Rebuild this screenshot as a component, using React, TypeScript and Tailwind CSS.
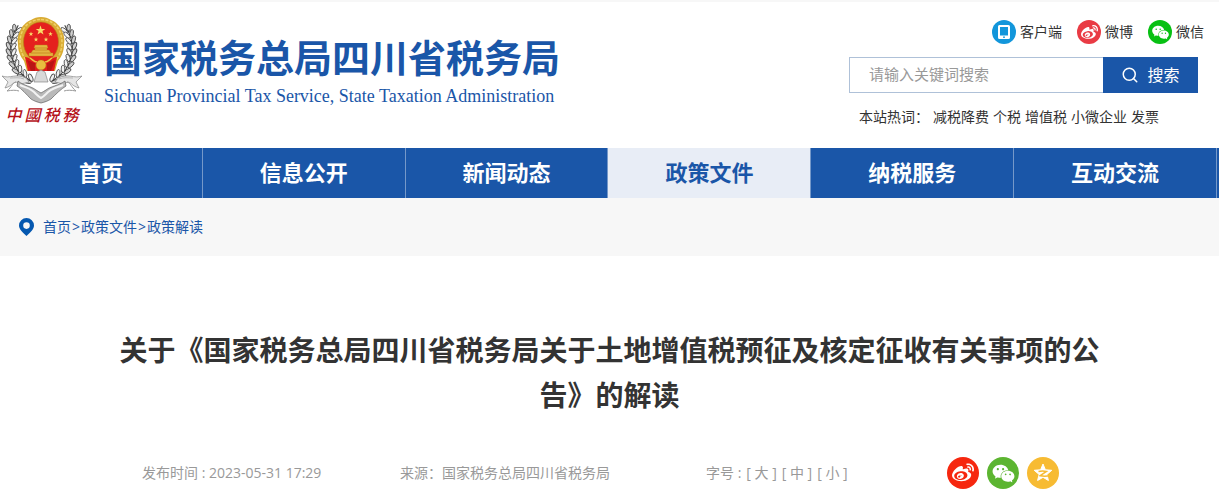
import { FaWeibo } from "react-icons/fa";
import { AiFillWechat } from "react-icons/ai";
import { Search } from "lucide-react";

const navItems = ["首页", "信息公开", "新闻动态", "政策文件", "纳税服务", "互动交流"];
const hotWords = ["减税降费", "个税", "增值税", "小微企业", "发票"];
const fontSizes = ["大", "中", "小"];

const star = "M0-5 1.2-1.6 4.8-1.6 1.9.6 3 4 0 1.9-3 4-1.9.6-4.8-1.6-1.2-1.6Z";

// leaves of the wreath, from the top down
const leaves = [
  { x: 17, y: 13, r: 24 },
  { x: 14, y: 18, r: 18 },
  { x: 12, y: 24, r: 12 },
  { x: 11, y: 30, r: 5 },
  { x: 11, y: 36, r: -2 },
  { x: 12, y: 42, r: -10 },
  { x: 14, y: 48, r: -18 },
  { x: 17, y: 54, r: -28 },
  { x: 22, y: 59, r: -40 },
  { x: 28, y: 64, r: -52 },
];

function Wreath() {
  return (
    <g>
      {leaves.map((l) => (
        <g key={l.y} transform={`translate(${l.x} ${l.y}) rotate(${l.r})`}>
          <ellipse cx="-2.6" cy="0" rx="1.8" ry="4" transform="rotate(-28)" fill="#cfcfcf" stroke="#4a4a4a" strokeWidth="0.9" />
          <ellipse cx="3" cy="0" rx="1.8" ry="4" transform="rotate(28)" fill="#f0f0f0" stroke="#555" strokeWidth="0.9" />
          <path d="M0-3V3" stroke="#3c3c3c" strokeWidth="1" />
        </g>
      ))}
    </g>
  );
}

function Emblem() {
  return (
    <svg viewBox="0 0 84 90" className="h-[90px] w-[84px]" aria-hidden="true">
      <Wreath />
      <g transform="translate(83 0) scale(-1 1)">
        <Wreath />
      </g>
      <path d="M41 2c4 0 7 1 10 3 5 2 9 6 11 11 2 4 3 8 2 13 0 7-2 12-6 17l-3 10H27l-3-10c-4-5-6-10-6-17-1-5 0-9 2-13 2-5 6-9 11-11 3-2 6-3 10-3Z" fill="#d9ab33" />
      <path d="M41 4.500c12 0 21 9 21 23 0 8-3 14-7 19H27c-4-5-7-11-7-19 0-14 9-23 21-23Z" fill="none" stroke="#efd068" strokeWidth="1.500" strokeDasharray="3 1.500" />
      <ellipse cx="41" cy="27" rx="17.500" ry="20" fill="#e5201e" stroke="#b77d14" strokeWidth="0.600" />
      <g fill="#f9dc68">
        <path d={star} transform="translate(40.5 15.5)" />
        <path d={star} transform="translate(31 19) scale(.48)" />
        <path d={star} transform="translate(50.5 19) scale(.48)" />
        <path d={star} transform="translate(36 24.5) scale(.48)" />
        <path d={star} transform="translate(46 24.5) scale(.48)" />
      </g>
      <path d="M35 30h12l1 3H34ZM35 33h12v2H35ZM33 35h16l2 3H31ZM29 38h24v3H29Z" fill="#e3b540" stroke="#c07f18" strokeWidth="0.400" />
      <path d="M25 42c5 0 6 4 11 3h10c5 1 6-3 11-3l-3 14H28Z" fill="#e11b1a" />
      <path d="M27 45c4 1 5 3 8 3v8h-4ZM55 45c-4 1-5 3-8 3v8h4Z" fill="#b91515" />
      <path d="M30 43c3 2 4 4 7 4M52 43c-3 2-4 4-7 4" fill="none" stroke="#efc54c" strokeWidth="1.500" />
      <circle cx="41" cy="50" r="5" fill="#e9bd3e" stroke="#b67b18" strokeWidth="0.800" strokeDasharray="1 .6" />
      <path d="M37 57l4-2 4 2 3 10H34Z" fill="#d8d8d8" stroke="#777" strokeWidth="0.600" />
      {/* ribbon */}
      <path d="M2 61c8 3 14-3 24 2l3 4-8 2-5-2c-4 1-4 4-11 6l3-6Z" fill="#e6e6e6" stroke="#858585" strokeWidth="0.700" />
      <path d="M82 61c-8 3-14-3-24 2l-3 4 8 2 5-2c4 1 4 4 11 6l-3-6Z" fill="#e6e6e6" stroke="#858585" strokeWidth="0.700" />
      <path d="M18 66c6 5 13 5 18 9 2 1 3 2 5 3 2-1 3-2 5-3 5-4 12-4 19-9l1 5c-5 3-10 8-15 13-3 2-6 3-10 4-4-1-7-2-10-4-5-5-9-10-14-13Z" fill="#b9b9b9" stroke="#606060" strokeWidth="0.700" />
      <path d="M20 70c6 3 11 3 16 9 2 2 3 3 5 4 2-1 3-2 5-4 5-6 10-6 17-9" fill="none" stroke="#f2f2f2" strokeWidth="2" />
      <path d="M16 67c-4 1-4 5-9 9 5-1 9-1 12 0M67 67c4 1 4 5 9 9-5-1-9-1-12 0" fill="none" stroke="#9a9a9a" strokeWidth="1" />
      <path d="M10 63c5 0 9-1 14 1M73 63c-5 0-9-1-14 1" fill="none" stroke="#aaa" strokeWidth="0.800" />
    </svg>
  );
}

function PhoneIcon() {
  return (
    <svg viewBox="0 0 24 24" className="size-6" aria-hidden="true">
      <path fillRule="evenodd" fill="#fff" d="M7.5 5h9A1.5 1.5 0 0 1 18 6.500v11a1.500 1.500 0 0 1-1.500 1.500h-9A1.500 1.500 0 0 1 6 17.500v-11A1.500 1.500 0 0 1 7.500 5ZM8 7v8.500h8V7Zm4 9.300a.9.9 0 1 0 0 1.800.9.9 0 0 0 0-1.800Z" />
    </svg>
  );
}

function QzoneIcon() {
  return (
    <svg viewBox="0 0 32 32" className="size-8" aria-hidden="true">
      <path d="M16 7l2.400 5.800 6.400.5-4.900 4.100 1.500 6.100-5.400-3.200-5.400 3.200 1.500-6.100-4.900-4.100 6.400-.5Z" fill="#fff" stroke="#fff" strokeLinejoin="round" />
      <path d="M11.500 14.500c2.600-.6 5.300-.5 8-.1l-6.300 4.300c3.200.7 7 .6 10.300-.5" fill="none" stroke="#f7bb33" strokeWidth="1.500" />
    </svg>
  );
}

export default function App() {
  return (
    <div className="min-h-screen bg-white font-['Open_Sans','Noto_Sans_CJK_SC',sans-serif] text-sm text-[#333]">
      <header className="flex items-start justify-between border-t-2 border-[#f7f7f7] pr-[15px] pb-[21px]">
        <a href="#" className="flex text-[#1a56a8]">
          <div className="flex w-[84px] flex-col items-center pt-[13px]">
            <Emblem />
            <span className="flex gap-[3px] text-base leading-5 font-medium text-[#b5121b] italic">
              <span>中</span>
              <span>國</span>
              <span>税</span>
              <span>務</span>
            </span>
          </div>
          <div className="pt-[31px] pl-5">
            <p className="text-[38px] leading-[48px] font-bold whitespace-nowrap">国家税务总局四川省税务局</p>
            <p className="font-['Liberation_Serif',serif] text-lg leading-[30px] whitespace-nowrap">
              Sichuan Provincial Tax Service, State Taxation Administration
            </p>
          </div>
        </a>

        <div className="pt-[18px]">
          <div className="flex justify-end gap-[15px] leading-6">
            <a href="#" className="flex gap-1">
              <span className="size-6 rounded-full bg-[#1296db]"><PhoneIcon /></span>
              客户端
            </a>
            <a href="#" className="flex gap-1">
              <span className="flex size-6 items-center justify-center rounded-full bg-[#e93b44] text-white"><FaWeibo size={17} /></span>
              微博
            </a>
            <a href="#" className="flex gap-1">
              <span className="flex size-6 items-center justify-center rounded-full bg-[#08c013] text-white"><AiFillWechat size={19} /></span>
              微信
            </a>
          </div>
          <form className="mt-[13px] mr-1.5 flex h-9">
            <input
              type="text"
              aria-label="请输入关键词搜索"
              placeholder="请输入关键词搜索"
              className="w-[254px] border border-r-0 border-[#afc1d8] pl-[19px] text-[15px] outline-none placeholder:text-[#999]"
            />
            <button type="button" className="flex w-[95px] items-center justify-center gap-2 bg-[#1a56a8] text-base text-white">
              <Search size={18} strokeWidth={2} />
              搜索
            </button>
          </form>
          <div className="mt-3.5 flex gap-1 pl-2.5 leading-5">
            <span>本站热词：</span>
            {hotWords.map((word) => (
              <a key={word} href="#">{word}</a>
            ))}
          </div>
        </div>
      </header>

      <nav className="grid h-[50px] grid-cols-6 bg-[#1a56a8] pr-0.5 text-[22px] font-bold">
        {navItems.map((item) => (
          <a
            key={item}
            href="#"
            className={
              item === "政策文件"
                ? "flex items-center justify-center border-r border-[#7598c9] bg-[#e8edf6] text-[#1a56a8]"
                : "flex items-center justify-center border-r border-[#7598c9] text-white"
            }
          >
            {item}
          </a>
        ))}
      </nav>

      <div className="flex h-[58px] items-center gap-px bg-[#f7f7f7] pl-[19px] text-[#1a56a8]">
        <svg viewBox="0 0 15 18" className="mr-2 h-[18px] w-[15px]" aria-hidden="true">
          <path fillRule="evenodd" fill="#0558b0" d="M7.500 0A7.500 7.500 0 0 0 0 7.500C0 11.500 4 14.500 7.500 18 11 14.500 15 11.500 15 7.500A7.500 7.500 0 0 0 7.500 0Zm0 4.300a3.300 3.300 0 1 1 0 6.600 3.300 3.300 0 0 1 0-6.600Z" />
        </svg>
        <a href="#">首页</a>&gt;<a href="#">政策文件</a>&gt;<a href="#">政策解读</a>
      </div>

      <main>
        <h1 className="px-[110px] pt-[72px] text-center text-[28px] leading-[45px] font-bold">
          关于《国家税务总局四川省税务局关于土地增值税预征及核定征收有关事项的公告》的解读
        </h1>
        <div className="mt-[39px] grid grid-cols-[258fr_306fr_241fr_130fr] items-center px-[142px] whitespace-nowrap text-[#999]">
          <span>发布时间 : 2023-05-31 17:29</span>
          <span>来源：国家税务总局四川省税务局</span>
          <div className="flex gap-[5px]">
            <span>字号 :</span>
            {fontSizes.map((size) => (
              <button key={size} type="button">[ {size} ]</button>
            ))}
          </div>
          <div className="flex gap-2">
            <button type="button" aria-label="微博" className="flex size-8 items-center justify-center rounded-full bg-[#f6270f] text-white"><FaWeibo size={22} /></button>
            <button type="button" aria-label="微信" className="flex size-8 items-center justify-center rounded-full bg-[#5cb531] text-white"><AiFillWechat size={25} /></button>
            <button type="button" aria-label="QQ空间" className="size-8 rounded-full bg-[#f7bb33]"><QzoneIcon /></button>
          </div>
        </div>
      </main>
    </div>
  );
}
